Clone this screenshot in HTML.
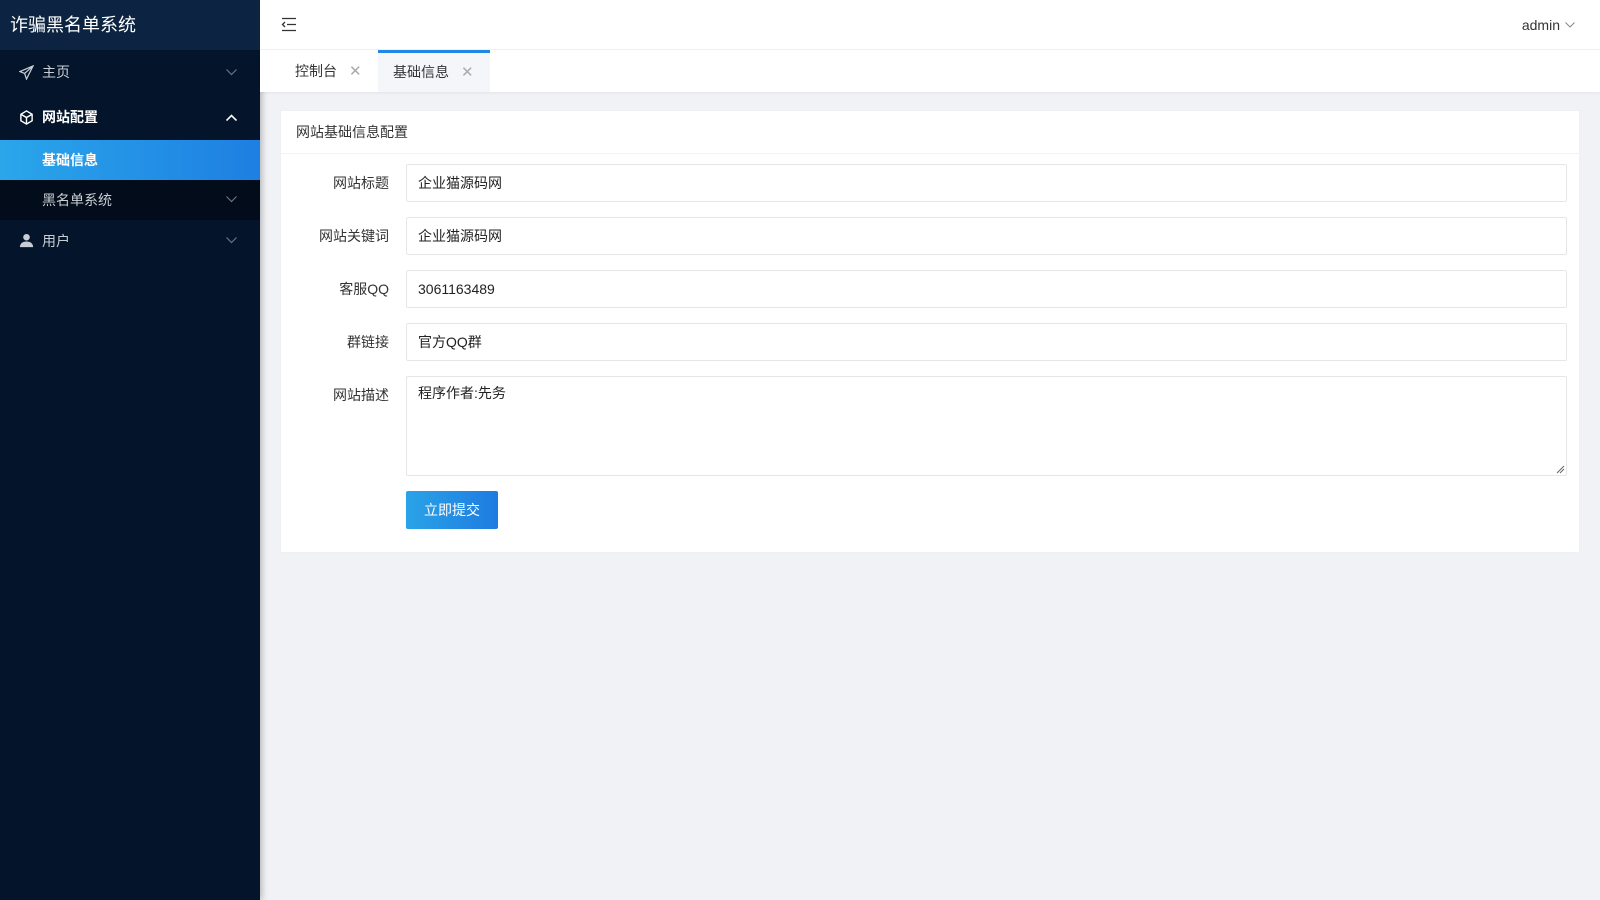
<!DOCTYPE html>
<html><head><meta charset="utf-8"><style>
*{margin:0;padding:0;box-sizing:border-box}
body{width:1600px;height:900px;background:#f0f2f5;font-family:"Liberation Sans","Noto Sans CJK SC",sans-serif;font-size:14px;color:#333;position:relative;overflow:hidden}
.side{position:absolute;left:0;top:0;width:260px;height:900px;background:#04152b;box-shadow:2px 0 6px rgba(0,0,0,.25)}
.logo{height:50px;background:#0c2441;color:#fff;font-size:18px;line-height:50px;padding-left:10px}
.mi{position:relative;height:45px;line-height:45px;color:#c9ced6;padding-left:42px;font-size:14px}
.mi svg.ic{position:absolute;left:19px;top:15px}
.mi .ar{position:absolute;left:226px;top:19px}
.sub{background:#020c1a}
.sub .mi{height:40px;line-height:40px}
.sub .mi .ar{top:16px}
.act{background:linear-gradient(90deg,#2aa6ea,#1e7fe2);color:#fff!important;font-weight:bold}
.hdr{position:absolute;left:260px;top:0;right:0;height:50px;background:#fff;border-bottom:1px solid #f2f2f2}
.tabs{position:absolute;left:260px;top:50px;right:0;height:42px;background:#fff;box-shadow:0 1px 3px rgba(0,0,0,.06)}
.tab{position:absolute;top:0;height:42px;line-height:42px;font-size:14px;color:#333}
.card{position:absolute;left:280px;top:110px;width:1300px;height:443px;background:#fff;border:1px solid #eef0f3}
.ct{height:43px;line-height:42px;padding-left:15px;border-bottom:1px solid #f2f2f2;color:#333}
.lbl{position:absolute;right:1190px;width:110px;text-align:right;font-size:14px;color:#333}
.inp{position:absolute;left:125px;width:1161px;height:38px;border:1px solid #e6e6e6;border-radius:2px;padding-left:11px;line-height:36px;font-size:14px;color:#222}
.btn{position:absolute;left:125px;top:380px;width:92px;height:38px;background:linear-gradient(90deg,#2aa3e8,#1e7be0);color:#fff;line-height:38px;text-align:center;border-radius:2px}
</style></head><body>
<div class="side">
<div class="logo">诈骗黑名单系统</div>
<div class="mi"><svg class="ic" width="15" height="15" viewBox="0 0 16 16" fill="none" stroke="#c9ced6" stroke-width="1.3"><path d="M15 1L1 7l5 2 2 6z M15 1L6 9"/></svg>主页<svg class="ar" width="11" height="7" viewBox="0 0 11 7"><path d="M0.5 .5l5 5 5-5" fill="none" stroke="#6a7482" stroke-width="1.2"/></svg></div>
<div class="mi" style="color:#fff;font-weight:bold"><svg class="ic" width="15" height="15" viewBox="0 0 16 16" fill="none" stroke="#fff" stroke-width="1.5"><path d="M8 1l6 3.5v7L8 15l-6-3.5v-7z M2 4.5L8 8l6-3.5 M8 8v7"/></svg>网站配置<svg class="ar" width="11" height="7" viewBox="0 0 11 7"><path d="M0.5 6.5l5-5 5 5" fill="none" stroke="#fff" stroke-width="1.6"/></svg></div>
<div class="sub">
<div class="mi act">基础信息</div>
<div class="mi">黑名单系统<svg class="ar" width="11" height="7" viewBox="0 0 11 7"><path d="M0.5 .5l5 5 5-5" fill="none" stroke="#6a7482" stroke-width="1.2"/></svg></div>
</div>
<div class="mi" style="height:42px;line-height:42px"><svg class="ic" style="top:13px" width="15" height="15" viewBox="0 0 16 16" fill="#c9ced6"><circle cx="8" cy="4.5" r="3.5"/><path d="M1 15c0-4 3-6 7-6s7 2 7 6z"/></svg>用户<svg class="ar" style="top:17px" width="11" height="7" viewBox="0 0 11 7"><path d="M0.5 .5l5 5 5-5" fill="none" stroke="#6a7482" stroke-width="1.2"/></svg></div>
</div>
<div class="hdr">
<svg style="position:absolute;left:21px;top:17px" width="16" height="15" viewBox="0 0 16 15" fill="none" stroke="#333" stroke-width="1.3"><path d="M1 1.5h14 M6 7.5h9 M1 13.5h14 M4 5L1.5 7.5 4 10"/></svg>
<div style="position:absolute;right:40px;top:17px;font-size:14px;color:#333">admin</div>
<svg style="position:absolute;right:25px;top:22px" width="10" height="6" viewBox="0 0 10 6"><path d="M.5.5l4.5 4.5 4.5-4.5" fill="none" stroke="#888" stroke-width="1"/></svg>
</div>
<div class="tabs">
<div class="tab" style="left:35px">控制台<span style="color:#aaa;margin-left:12px;font-size:15px">✕</span></div>
<div class="tab" style="left:118px;width:112px;background:#f4f6f9;border-top:3px solid #1e88e5;line-height:38px;padding-left:15px">基础信息<span style="color:#aaa;margin-left:12px;font-size:15px">✕</span></div>
</div>
<div class="card">
<div class="ct">网站基础信息配置</div>
<div class="lbl" style="top:62px">网站标题</div><div class="inp" style="top:53px">企业猫源码网</div>
<div class="lbl" style="top:115px">网站关键词</div><div class="inp" style="top:106px">企业猫源码网</div>
<div class="lbl" style="top:168px">客服QQ</div><div class="inp" style="top:159px">3061163489</div>
<div class="lbl" style="top:221px">群链接</div><div class="inp" style="top:212px">官方QQ群</div>
<div class="lbl" style="top:274px">网站描述</div><div class="inp" style="top:265px;height:100px;line-height:20px;padding-top:6px">程序作者:先务
<svg style="position:absolute;right:1px;bottom:1px" width="9" height="9" viewBox="0 0 9 9" stroke="#666" stroke-width="1"><path d="M1 8L8 1 M4 8L8 4"/></svg></div>
<div class="btn">立即提交</div>
</div>
</body></html>
